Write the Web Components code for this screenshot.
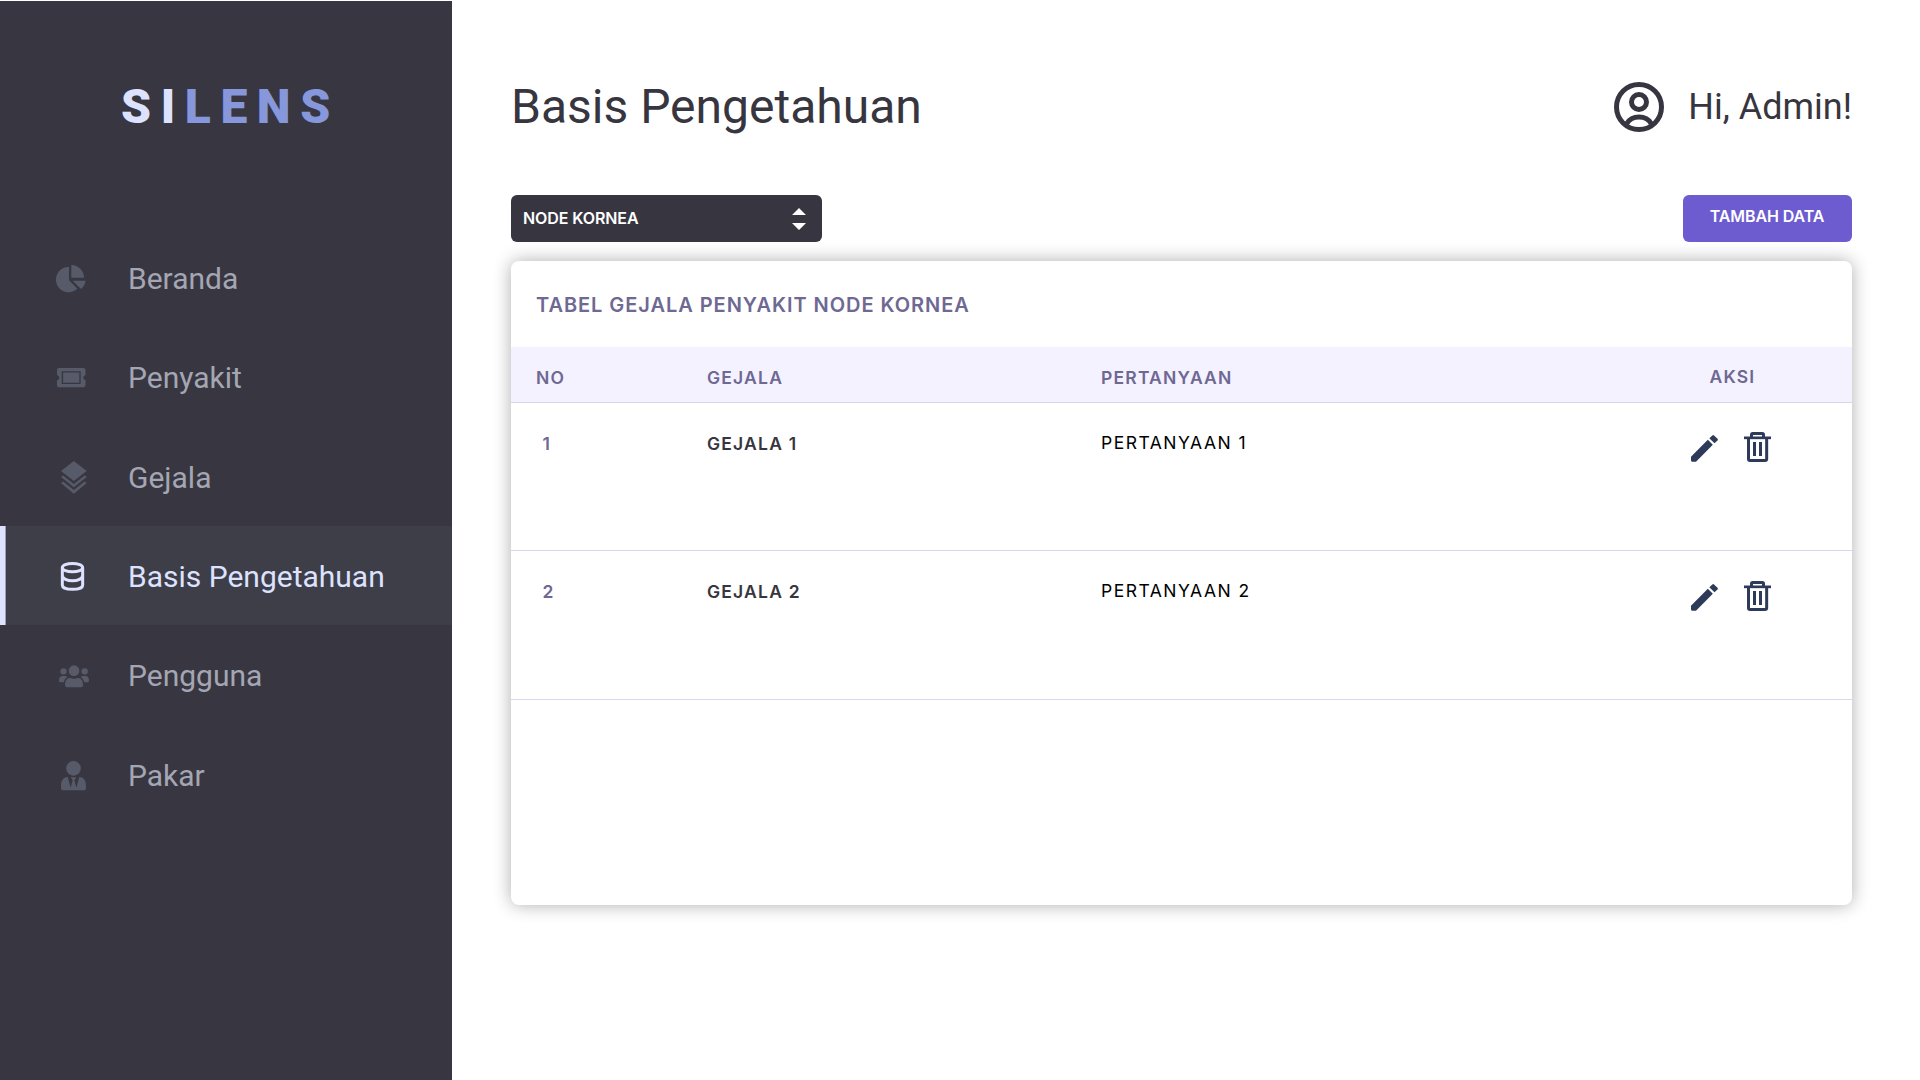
<!DOCTYPE html>
<html lang="id">
<head>
<meta charset="utf-8">
<title>SILENS - Basis Pengetahuan</title>
<style>
  html, body { margin: 0; height: 1080px; background: #fff; overflow: hidden; }
</style>
</head>
<body>
<si-app>
  <si-sidebar slot="side">
    <si-nav-item icon="pie">Beranda</si-nav-item>
    <si-nav-item icon="ticket">Penyakit</si-nav-item>
    <si-nav-item icon="layers">Gejala</si-nav-item>
    <si-nav-item icon="database" active>Basis Pengetahuan</si-nav-item>
    <si-nav-item icon="users">Pengguna</si-nav-item>
    <si-nav-item icon="expert">Pakar</si-nav-item>
  </si-sidebar>
  <si-header user="Hi, Admin!">Basis Pengetahuan</si-header>
  <si-toolbar>
    <si-select>NODE KORNEA</si-select>
    <si-button slot="end">TAMBAH DATA</si-button>
  </si-toolbar>
  <si-card>
    <span slot="title">TABEL GEJALA PENYAKIT NODE KORNEA</span>
    <si-table-head></si-table-head>
    <si-row no="1" gejala="GEJALA 1" pertanyaan="PERTANYAAN 1"></si-row>
    <si-row no="2" gejala="GEJALA 2" pertanyaan="PERTANYAAN 2" class="tall"></si-row>
  </si-card>
</si-app>
<script>
const define = (name, html) => customElements.define(name, class extends HTMLElement {
  constructor() {
    super();
    const t = document.createElement('template');
    t.innerHTML = typeof html === 'function' ? html(this) : html;
    this.attachShadow({ mode: 'open' }).append(t.content.cloneNode(true));
  }
});

// Each icon: left offset (px), then its viewBox x, y, width, height at three units per pixel, and its shapes.
const icons = {
  pie: [56.7, 50, 42, 86, 82, `<path d="M86 48V88L111 113.500A38 38 0 1 1 86 48Z"/><path d="M93 42A39 39 0 0 1 131 80.500H93Z"/><path d="M97 89H135.500Q134 104 122 114Z"/>`],
  ticket: [56.7, 50, 353, 86, 58, `<path fill-rule="evenodd" d="M56 353H129Q135.500 353 135.500 359V374Q129 376 129 382T135.500 390V405Q135.500 411 129 411H56Q50 411 50 405V390Q57 388 57 382T50 374V359Q50 353 56 353ZM64 363V401H121V363ZM68.500 366.500H117V397H68.500Z"/>`],
  layers: [61, 63, 632, 77, 98, `<path d="M101.500 632 140 662 101.500 692 63 662Z"/><path d="M63 680 69 675.500 101.500 701 134 675.500 140 680 101.500 711Z"/><path d="M63 698 69 693.500 101.500 719 134 693.500 140 698 101.500 730Z"/>`],
  database: [61, 183, 726, 69, 87, `<g fill="none" stroke="currentColor" stroke-width="9"><ellipse cx="217.500" cy="743" rx="30.500" ry="12.500"/><path d="M187 743V796C187 812 248 812 248 796V743M187 766C187 788 248 788 248 766"/></g>`],
  users: [59, 177, 131, 90, 67, `<circle cx="222" cy="148" r="16"/><circle cx="190.500" cy="150" r="9.500"/><circle cx="254" cy="150" r="9.500"/><path d="M195 192C195 178 200 170 211 170Q222 174 233 170C244 170 249 178 249 192Q249 198 243 198H201Q195 198 195 192Z"/><path d="M177 178Q177 164 188 164H195Q199 164 202 167Q193 172 191 183H181Q177 183 177 178ZM267 178Q267 164 256 164H249Q245 164 242 167Q251 172 253 183H263Q267 183 267 178Z"/>`],
  expert: [61, 183, 422, 75, 88, `<circle cx="220.500" cy="444" r="22"/><path d="M183 498C183 481 189 471 203 470L212 502 218 480 212 471H229L223 480 229 502 238 470C252 471 258 481 258 498V502Q258 510 250 510H191Q183 510 183 502Z"/>`]
};
const svg = (w, h, box, body, extra = '') =>
  `<svg width="${w}" height="${h}" viewBox="${box}" fill="currentColor" ${extra}>${body}</svg>`;

define('si-app', `
<style>
  :host { display: flex; width: 1920px; height: 1080px; font-family: Roboto, sans-serif; color: #373640; }
  main { flex: 1; padding: 0 68px 0 59px; display: flex; flex-direction: column; }
</style>
<slot name="side"></slot><main><slot></slot></main>`);

define('si-sidebar', `
<style>
  :host { display: flex; flex-direction: column; box-sizing: border-box; width: 452px; height: 1079px; margin-top: 1px; background: #383741; }
  .logo { height: 148.700px; padding: 78px 0 0 121px; font: 900 48px/56px Roboto, sans-serif; letter-spacing: 9.600px; color: #8698db; white-space: nowrap; }
  b { font-weight: inherit; color: #dde2ff; }
</style>
<div class="logo"><b>SI</b>LENS</div>
<nav><slot></slot></nav>`);

define('si-nav-item', el => {
  const [left, x, y, w, h, body] = icons[el.getAttribute('icon')];
  return `
<style>
  :host { display: flex; align-items: center; box-sizing: border-box; height: 99.370px; padding-top: 2px; color: #a4a6b3; font: 400 30px/36px Roboto, sans-serif; }
  :host([active]) { background: #3e3e48; color: #dde2ff; box-shadow: inset 5.600px 0 #dde2ff; }
  .icon { flex: none; display: flex; box-sizing: border-box; width: 128px; padding-left: ${left}px; color: #575b69; }
  :host([active]) .icon { color: inherit; }
  .label { padding-top: 1px; }
  svg { display: block; overflow: visible; }
</style>
<span class="icon">${svg(w / 3, h / 3, `${x} ${y} ${w} ${h}`, body)}</span><span class="label"><slot></slot></span>`;
});

define('si-header', el => `
<style>
  :host { display: flex; justify-content: space-between; height: 195px; box-sizing: border-box; padding-top: 78px; }
  h1 { margin: 1px 0 0; font: 400 48px/56px Roboto, sans-serif; }
  .user { display: flex; align-items: center; height: 58px; gap: 24px; font: 400 36px/42px Roboto, sans-serif; }
</style>
<h1><slot></slot></h1>
<div class="user">${svg(50, 50, '162 96 150 150', `<g fill="none" stroke="currentColor" stroke-width="15"><circle cx="237" cy="171" r="67.500"/><circle cx="237" cy="156" r="22.500"/><path d="M200 221Q212 201 237 201T274 221"/></g>`)}<span>${el.getAttribute('user')}</span></div>`);

define('si-toolbar', `
<style>:host { display: flex; justify-content: space-between; height: 66px; align-items: flex-start; }</style>
<slot></slot><slot name="end"></slot>`);

define('si-select', `
<style>
  :host { display: flex; justify-content: space-between; align-items: center; box-sizing: border-box; width: 311px; height: 47.400px; padding: 0 16px 0 12px; border-radius: 6px; background: #373640; color: #fff; font: 600 16px/20px Inter, sans-serif; letter-spacing: -.1px; }
  span { margin-bottom: 1px; }
</style>
<span><slot></slot></span>
${svg(14, 22, '907 474 42 66', '<path d="M907 495 928 474 949 495ZM907 519 928 540 949 519Z"/>')}`);

define('si-button', `
<style>
  :host { display: flex; justify-content: center; box-sizing: border-box; width: 169px; height: 47.400px; padding: 11px 1px 0 0; border-radius: 6px; background: #6d5bd0; color: #fff; font: 600 16px/20px Inter, sans-serif; letter-spacing: -.1px; }
</style>
<slot></slot>`);

define('si-card', `
<style>
  :host { display: block; box-sizing: border-box; height: 644px; border-radius: 8px; background: #fff; box-shadow: 0 0 18px rgba(0,0,0,.32); }
  h2 { margin: 0; height: 86px; box-sizing: border-box; padding: 32px 25px 0; font: 600 20px/24px Inter, sans-serif; letter-spacing: .950px; color: #6e6893; }
</style>
<h2><slot name="title"></slot></h2><slot></slot>`);

const grid = `
  :host { display: grid; grid-template-columns: 171px 394px 587.500px 1fr; box-sizing: border-box; padding-left: 25px; border-bottom: 1px solid #d9d5ec; font: 600 17.500px/22px Inter, sans-serif; letter-spacing: 1.200px; color: #6e6893; }`;

define('si-table-head', `
<style>${grid}
  :host { height: 56px; padding-top: 20px; background: #f4f2ff; }
  .act { padding-left: 21px; margin-top: -1px; }
</style>
<span>NO</span><span>GEJALA</span><span>PERTANYAAN</span><span class="act">AKSI</span>`);

define('si-row', el => `
<style>${grid}
  :host { height: 148px; padding-top: 30px; }
  :host(.tall) { height: 149px; }
  .no { padding-left: 6.500px; }
  .name { color: #373640; }
  .ask { font-weight: 400; letter-spacing: 1.500px; color: #000; margin-top: -1px; }
  .act { display: flex; align-items: flex-start; gap: 26px; margin-top: -1px; padding-left: 2px; color: #2e3a59; }
  .pen { margin-top: 3px; }
  :host(.tall) .act { margin-top: 0; }
</style>
<span class="no">${el.getAttribute('no')}</span>
<span class="name">${el.getAttribute('gejala')}</span>
<span class="ask">${el.getAttribute('pertanyaan')}</span>
<span class="act">
${svg(27, 27, '153 285 81 81', '<path d="M153 350 203.500 299.500 218.500 314.500 168 365H156.500Q153 365 153 361.500ZM208 295 217 286.500Q219.500 284 222 286.500L232.500 296.500Q235 299 232.500 301.500L223.500 310Z"/>', 'class="pen"')}
${svg(27, 30, '312 276 81 90', '<path d="M312 289.500H393V297.500H312Z"/><path d="M339 306H348V348H339ZM357 306H366V348H357Z"/><g fill="none" stroke="currentColor" stroke-width="9" stroke-linejoin="round"><path d="M334.500 293V284Q334.500 280.500 338 280.500H367Q370.500 280.500 370.500 284V293"/><path d="M325.500 293V357Q325.500 361.500 330 361.500H375Q380 361.500 380 357V293"/></g>')}
</span>`);
</script>
</body>
</html>
